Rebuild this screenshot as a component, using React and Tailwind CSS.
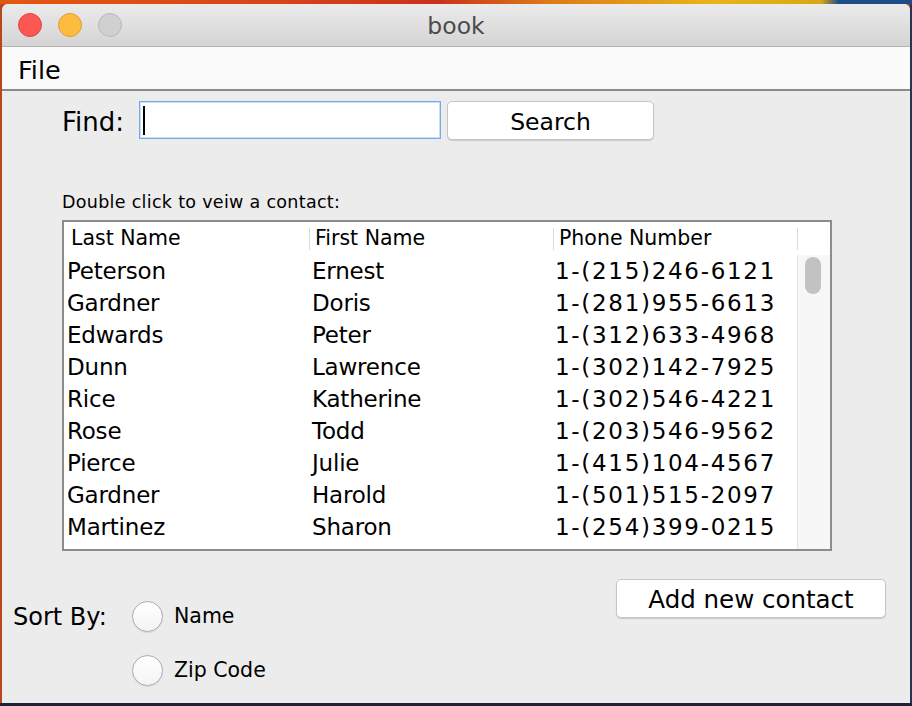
import React from 'react';

// Contact rows shown in the table
const contacts = [
  ['Peterson', 'Ernest', '1-(215)246-6121'],
  ['Gardner', 'Doris', '1-(281)955-6613'],
  ['Edwards', 'Peter', '1-(312)633-4968'],
  ['Dunn', 'Lawrence', '1-(302)142-7925'],
  ['Rice', 'Katherine', '1-(302)546-4221'],
  ['Rose', 'Todd', '1-(203)546-9562'],
  ['Pierce', 'Julie', '1-(415)104-4567'],
  ['Gardner', 'Harold', '1-(501)515-2097'],
  ['Martinez', 'Sharon', '1-(254)399-0215'],
];

const font = { fontFamily: '"DejaVu Sans", "Liberation Sans", sans-serif' };

const Radio = () => (
  <div className="w-[31px] h-[31px] rounded-full border border-[#acacac] bg-[linear-gradient(180deg,#ffffff,#f4f4f4)] shadow-[0_1px_1px_rgba(0,0,0,0.08)]" />
);

export default function App() {
  return (
    <div className="w-[912px] h-[706px] overflow-hidden flex flex-col bg-[#1c2338]" style={font}>
      {/* Wallpaper strip above the window */}
      <div className="h-[4px] bg-[linear-gradient(90deg,#e3580f_0%,#d8441a_30%,#c9321a_48%,#dc7a18_60%,#e8b418_78%,#dba616_90%,#1f4d8a_92%,#1f4d8a_100%)]" />

      <div className="flex bg-[#b8481c]">
        <div className="w-[2px]" />

        {/* Window */}
        <div className="w-[908px] h-[699px] flex flex-col bg-[#ececec] rounded-t-[6px] overflow-hidden">
          {/* Title bar */}
          <div className="h-[43px] flex items-center border-b border-[#b3b3b3] bg-[linear-gradient(180deg,#ebebeb,#d4d4d4)]">
            <div className="flex items-center gap-[16px] pl-[16px] w-[130px]">
              <div className="w-[24px] h-[24px] rounded-full bg-[#fc5753] border border-[#df4744]" />
              <div className="w-[24px] h-[24px] rounded-full bg-[#fdbc40] border border-[#de9f34]" />
              <div className="w-[24px] h-[24px] rounded-full bg-[#d0d0d0] border border-[#b9b9b9]" />
            </div>
            <div className="flex-1 text-center text-[23.5px] text-[#4b4b4b] pr-[130px] pt-[4px]">book</div>
          </div>

          {/* Menu bar */}
          <div className="h-[44px] flex items-center bg-[#fafafa] border-b-2 border-[#8a8a8a] pl-[16px]">
            <span className="text-[25.5px] text-black pt-[5px]">File</span>
          </div>

          {/* Content */}
          <div className="flex flex-col">
            {/* Search row */}
            <div className="flex items-start mt-[10px] pl-[60px]">
              <span className="w-[77px] text-[26px] leading-[38px] pt-[2px] text-black">Find:</span>
              <div className="w-[302px] h-[38px] bg-white border border-[#78aae8] shadow-[inset_0_0_0_1px_#c8def7] flex items-center pl-[3px]">
                <div className="w-[2px] h-[29px] bg-black" />
              </div>
              <button className="ml-[6px] w-[207px] h-[39px] bg-white border border-[#c6c6c6] rounded-[5px] shadow-[0_1px_1px_rgba(0,0,0,0.15)] text-[23.5px] leading-[34px] pt-[3px] text-black">
                Search
              </button>
            </div>

            <div className="mt-[51px] pl-[60px] text-[17.5px] leading-[20px] tracking-[0.3px] text-black">
              Double click to veiw a contact:
            </div>

            {/* Contacts table */}
            <div className="mt-[8px] ml-[60px] w-[770px] h-[331px] border-2 border-[#8c8c8c] bg-white flex flex-col">
              <div className="h-[33px] flex items-center text-[20.5px] text-black">
                <div className="w-[245px] pl-[7px] leading-[33px]">Last Name</div>
                <div className="w-px h-[22px] bg-[#dadada]" />
                <div className="w-[243px] pl-[5px] leading-[33px]">First Name</div>
                <div className="w-px h-[22px] bg-[#dadada]" />
                <div className="w-[243px] pl-[5px] leading-[33px]">Phone Number</div>
                <div className="w-px h-[22px] bg-[#dadada]" />
              </div>
              <div className="flex h-[294px]">
                <div className="w-[733px] overflow-hidden">
                  {contacts.map(([last, first, phone], i) => (
                    <div key={i} className="h-[32px] flex text-[23px] leading-[32px] text-black">
                      <div className="w-[245px] pl-[3px] tracking-[-0.2px]">{last}</div>
                      <div className="w-[244px] pl-[3px] tracking-[-0.2px]">{first}</div>
                      <div className="w-[244px] pl-[2px] tracking-[1.7px]">{phone}</div>
                    </div>
                  ))}
                </div>
                {/* Scrollbar */}
                <div className="w-[33px] bg-[#f7f7f7] border-l border-[#e6e6e6] pl-[7px] pt-[2px]">
                  <div className="w-[16px] h-[37px] rounded-full bg-[#c2c2c2]" />
                </div>
              </div>
            </div>

            {/* Bottom controls */}
            <div className="flex justify-between items-start">
              <div className="flex flex-col pl-[11px] mt-[49px]">
                <div className="h-[32px] flex items-center">
                  <span className="w-[119px] text-[24px] leading-[32px] pt-[1px] text-black">Sort By:</span>
                  <Radio />
                  <span className="ml-[11px] text-[20.5px] leading-[32px] text-black">Name</span>
                </div>
                <div className="h-[32px] flex items-center mt-[22px] pl-[119px]">
                  <Radio />
                  <span className="ml-[11px] text-[20.5px] leading-[32px] text-black">Zip Code</span>
                </div>
              </div>
              <button className="mt-[28px] mr-[24px] w-[270px] h-[39px] bg-white border border-[#c6c6c6] rounded-[5px] shadow-[0_1px_1px_rgba(0,0,0,0.15)] text-[24.5px] leading-[34px] pt-[3px] text-black">
                Add new contact
              </button>
            </div>
          </div>
        </div>

        <div className="w-[2px] bg-[#2a3350]" />
      </div>
    </div>
  );
}
